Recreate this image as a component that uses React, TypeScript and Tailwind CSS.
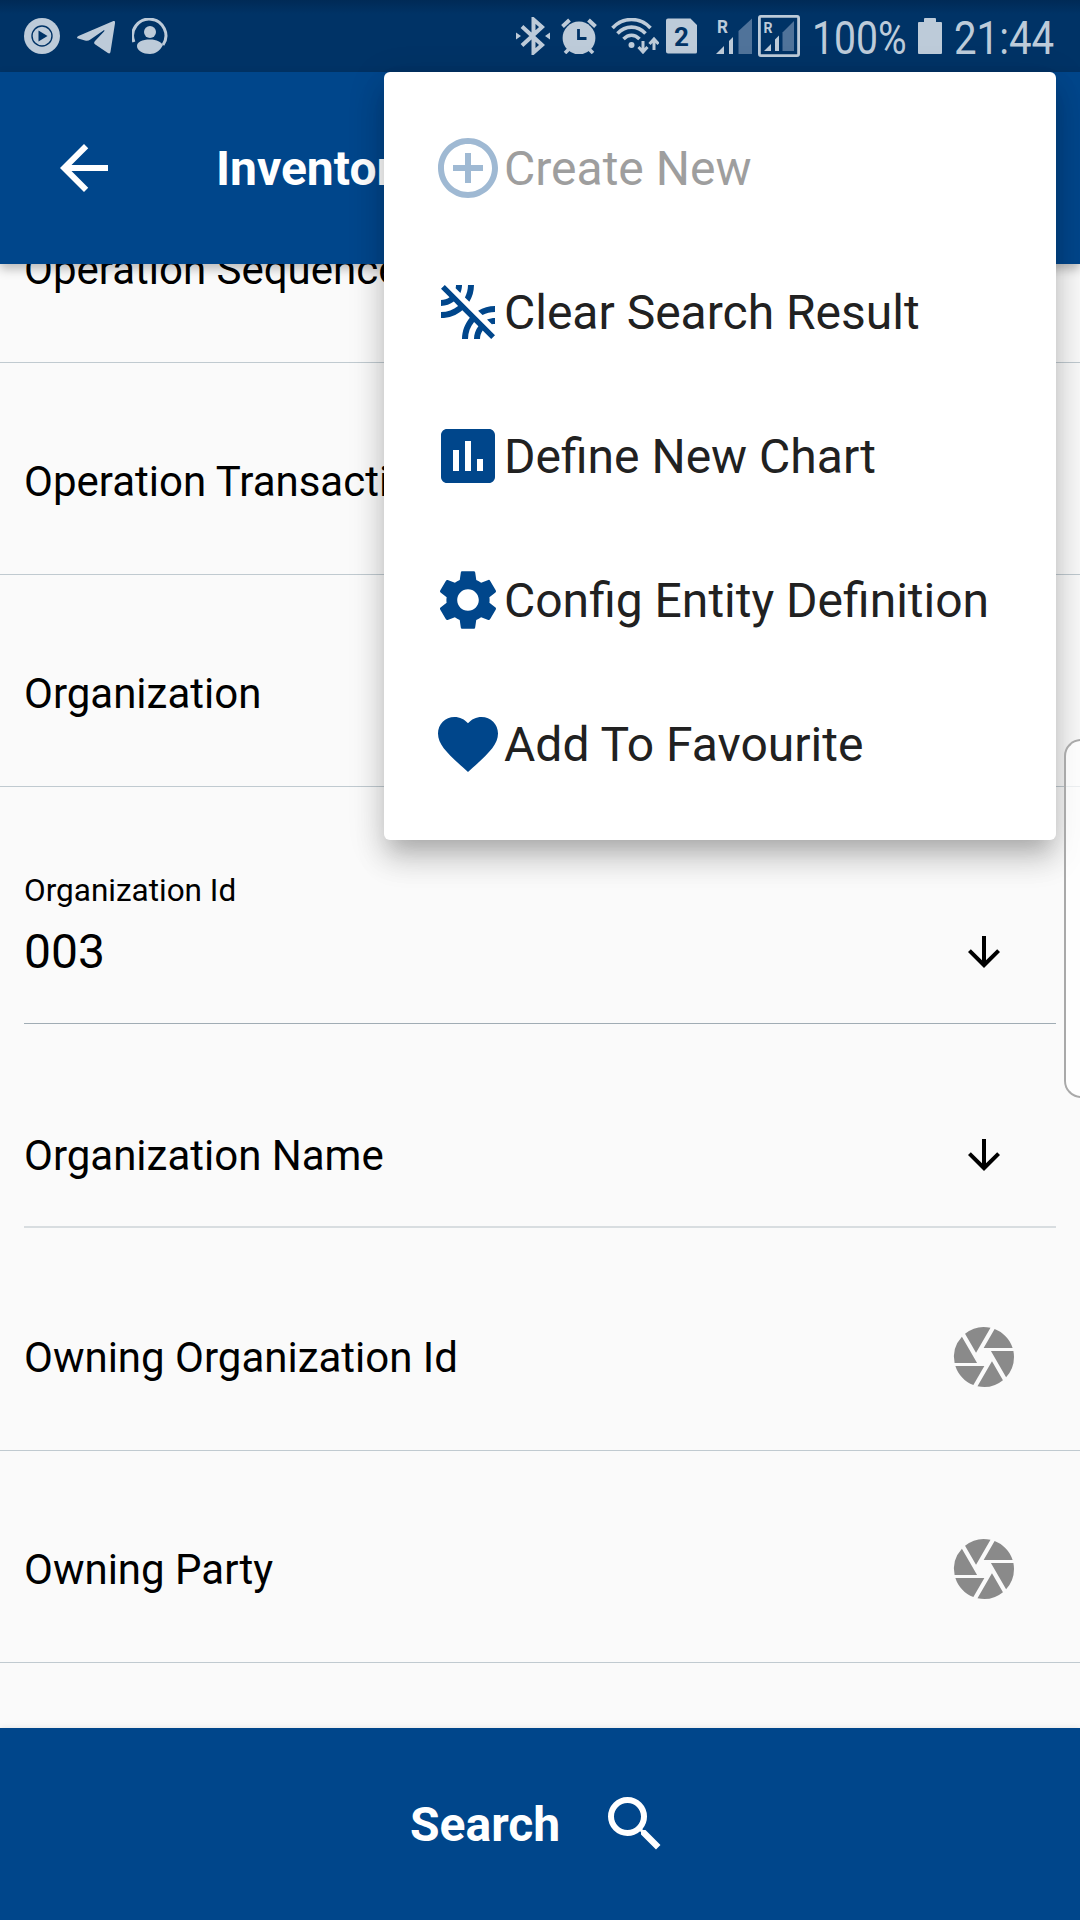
import type { ReactNode } from 'react';
import {
  MdArrowBack,
  MdArrowDownward,
  MdAssessment,
  MdCamera,
  MdControlPoint,
  MdFavorite,
  MdSearch,
  MdSettings,
} from 'react-icons/md';

function PlayBadge() {
  return (
    <svg className="h-9 w-9" viewBox="0 0 36 36" fill="none">
      <circle cx="18" cy="18" r="18" fill="#bdcbd9" />
      <circle cx="18" cy="18" r="10" stroke="#003366" strokeWidth="1.4" />
      <path d="M14.5 12.5v11l9-5.5z" fill="#003366" />
    </svg>
  );
}

function Telegram() {
  return (
    <svg className="ml-[17px] h-9 w-[38px]" viewBox="0 0 38 36" fill="#bdcbd9">
      <path d="M36.4 3.1c1.2-.4 1.8.2 1.7 1.4l-4.6 29.3c-.3 1.7-1.3 2-2.6 1.1L18.3 26.5c-1.5-1.2-1.5-2.2-.3-3.5l9-9.5c1-1.1.2-1.5-.9-.8L13.4 21.6c-1.8 1.2-3.5 1.5-5.4.9L1.2 20.6c-1.6-.5-1.5-1.8.2-2.7z" />
    </svg>
  );
}

function Person() {
  return (
    <svg className="ml-[17px] h-9 w-9" viewBox="0 0 36 36" fill="none">
      <path d="M1.9 24A16.6 16.6 0 1 1 31 27" stroke="#bdcbd9" strokeWidth="3" />
      <circle cx="18" cy="14" r="6" fill="#bdcbd9" />
      <path d="M5 28C5 24 10 21.5 18 21.5C25 21.5 29 24 31 27C28 33 23 36 18 36C11 36 5 32.500 5 28z" fill="#bdcbd9" />
    </svg>
  );
}

function Bluetooth() {
  return (
    <svg className="h-[38px] w-[34px]" viewBox="0 0 34 38" fill="none">
      <path d="M6 9.500l20 18.500-8.500 7.500v-33l8.500 7.500L6 28.500" stroke="#bdcbd9" strokeWidth="4" />
      <path d="M0 15.500v7l5-3.500zM34 15.500v7l-5-3.500z" fill="#bdcbd9" />
    </svg>
  );
}

function Alarm() {
  return (
    <svg className="ml-[11px] h-9 w-9" viewBox="0 0 36 36" fill="none">
      <circle cx="18" cy="20" r="16.4" fill="#bdcbd9" />
      <path d="M1.5 8.500L8.500 2M34.500 8.500L27.500 2" stroke="#bdcbd9" strokeWidth="4" />
      <path d="M8 31l-4 4M28 31l4 4" stroke="#bdcbd9" strokeWidth="3.600" />
      <path d="M17.500 11v9.500h8" stroke="#003366" strokeWidth="2.800" />
    </svg>
  );
}

function Wifi() {
  return (
    <svg className="ml-[14px] h-9 w-12" viewBox="0 0 48 36" fill="none" stroke="#bdcbd9">
      <path d="M1.5 10C12-1.300 29-1.300 39.500 10" strokeWidth="3.600" />
      <path d="M6.500 15.500c8-8.500 20-8.500 28 0" strokeWidth="3.600" />
      <path d="M12.500 21c5-5 11-5 16 0" strokeWidth="3.600" />
      <circle cx="20.500" cy="27" r="3" fill="#bdcbd9" stroke="none" />
      <path d="M32 23v10M27.500 29l4.500 5 4.500-5M43 32V22M38.500 26l4.500-5 4.500 5" strokeWidth="3" />
    </svg>
  );
}

function Sim() {
  return (
    <svg className="ml-[7px] h-9 w-[31px]" viewBox="0 0 31 36">
      <path d="M2 .5h22.500L31 7v27a1.500 1.500 0 0 1-1.500 1.500H2A2 2 0 0 1 0 33.500v-31a2 2 0 0 1 2-2z" fill="#bdcbd9" />
      <text x="15.500" y="28" textAnchor="middle" fontFamily="Roboto" fontSize="26" fontWeight="700" fill="#003366">2</text>
    </svg>
  );
}

function Signal() {
  return (
    <svg className="ml-[19px] h-9 w-9" viewBox="0 0 36 36" fill="#bdcbd9">
      <text x="1" y="15" fontFamily="Roboto" fontSize="17.500" fontWeight="700" textLength="11" lengthAdjust="spacingAndGlyphs">R</text>
      <path d="M0 36l8-8v8zM13 36V23l4-4v17z" />
      <path d="M22.500 36V13L36 .5V36z" fill="#50739a" />
    </svg>
  );
}

function BoxedSignal() {
  return (
    <svg className="ml-[6px] h-[42px] w-[42px]" viewBox="0 0 42 42" fill="#bdcbd9">
      <rect x="1.400" y="1.400" width="39.200" height="39.200" rx="1.500" fill="none" stroke="#bdcbd9" strokeWidth="2.800" />
      <text x="5.500" y="18" fontFamily="Roboto" fontSize="15" fontWeight="700" textLength="9" lengthAdjust="spacingAndGlyphs">R</text>
      <path d="M6 36l7-7v7zM17 36V24.500l4-4V36z" />
      <path d="M24.500 36V17.500L36 6v30z" fill="#50739a" />
    </svg>
  );
}

function LeakRemove() {
  return (
    <svg className="size-[72px]" viewBox="0 0 24 24" fill="currentColor">
      <path d="M10 3H8c0 .37-.04.72-.12 1.060l1.590 1.590C9.810 4.840 10 3.940 10 3zM3 4.270l2.840 2.840C5.030 7.670 4.060 8 3 8v2c1.610 0 3.090-.55 4.270-1.460L8.700 9.970C7.140 11.240 5.160 12 3 12v2c2.710 0 5.190-.99 7.110-2.620l2.500 2.500C10.990 15.810 10 18.290 10 21h2c0-2.160.76-4.140 2.030-5.690l1.430 1.430C14.550 17.910 14 19.390 14 21h2c0-1.060.33-2.030.89-2.840L19.730 21 21 19.730 4.270 3 3 4.270zM14 3h-2c0 1.500-.37 2.910-1.020 4.160l1.460 1.460C13.420 6.980 14 5.060 14 3zm5.940 13.120c.34-.08.69-.12 1.060-.12v-2c-.94 0-1.840.19-2.660.52l1.600 1.600zm-4.560-4.560l1.460 1.460C18.090 12.370 19.500 12 21 12v-2c-2.060 0-3.980.58-5.620 1.560z" />
    </svg>
  );
}

function StatusBar() {
  return (
    <header className="flex h-[72px] shrink-0 items-center bg-[linear-gradient(#002a56,#003366_14px)] pl-6 text-[46px] leading-[72px] text-[#bdcbd9]">
      <PlayBadge />
      <Telegram />
      <Person />
      <div className="ml-[348px] flex items-center">
        <Bluetooth />
        <Alarm />
        <Wifi />
        <Sim />
        <Signal />
        <BoxedSignal />
      </div>
      <span className="ml-[12px] mt-[3px] w-[94px] shrink-0">
        <span className="inline-block origin-left scale-x-[0.85]">100%</span>
      </span>
      <svg className="ml-[12px] h-9 w-6 shrink-0" viewBox="0 0 24 36" fill="#bdcbd9">
        <path d="M7 0h10q1 0 1 1v3h5q1 0 1 1v30q0 1-1 1H1q-1 0-1-1V5q0-1 1-1h5V1q0-1 1-1z" />
      </svg>
      <span className="ml-[12px] mt-[3px] w-[100px] shrink-0">
        <span className="inline-block origin-left scale-x-[0.875]">21:44</span>
      </span>
    </header>
  );
}

function FieldRow({ label, scan = false }: { label: string; scan?: boolean }) {
  return (
    <div className="flex h-[212px] shrink-0 items-center justify-between border-b border-[#c0cad0] pl-6 pr-[60px] pt-6">
      <span className="whitespace-nowrap pt-[2px]">{label}</span>
      {scan && <MdCamera className="size-[72px] text-[#8a8a8a]" />}
    </div>
  );
}

function MenuItem({ icon, children, disabled = false }: { icon: ReactNode; children: string; disabled?: boolean }) {
  return (
    <li className={disabled ? 'flex h-36 items-center text-[#9e9e9e]' : 'flex h-36 items-center text-[#212121]'}>
      <span className={disabled ? 'text-[72px] text-[#9fb9d3]' : 'text-[72px] text-[#00468b]'}>{icon}</span>
      <span className="whitespace-nowrap pt-[2px]">{children}</span>
    </li>
  );
}

export default function App() {
  return (
    <div className="relative flex h-[1920px] w-[1080px] flex-col overflow-hidden bg-[#fafafa] font-[Roboto,sans-serif] text-[42px] leading-[50px] text-black">
      <StatusBar />
      <div className="z-10 flex h-48 shrink-0 items-center bg-[#00468b] pl-12 text-white shadow-[0_5px_10px_rgba(0,0,0,0.26)]">
        <MdArrowBack className="size-[72px]" />
        <h1 className="ml-24 pt-[2px] text-[48px] font-bold">Inventory</h1>
      </div>

      <main className="flex min-h-0 flex-1 flex-col overflow-hidden">
        <div className="-mt-[113px] flex flex-col">
          <FieldRow label="Operation Sequence" />
          <FieldRow label="Operation Transaction" />
          <FieldRow label="Organization" />
          <div className="mx-6 flex h-[237px] shrink-0 flex-col border-b border-[#a0acb4] pt-[85px]">
            <span className="text-[31.5px] leading-[38px]">Organization Id</span>
            <div className="mt-[12px] flex items-center justify-between pr-12 text-[48px] leading-[60px]">
              <span>003</span>
              <MdArrowDownward className="size-12" />
            </div>
          </div>
          <div className="mx-6 mb-[11px] flex h-[204px] shrink-0 items-center justify-between border-b-2 border-[#d8dde0] pr-12 pt-[60px]">
            <span className="pt-[2px]">Organization Name</span>
            <MdArrowDownward className="size-12" />
          </div>
          <FieldRow label="Owning Organization Id" scan />
          <FieldRow label="Owning Party" scan />
        </div>
      </main>

      <footer className="z-10 flex h-48 shrink-0 items-center bg-[#00468b] pl-[410px] text-[48px] font-bold text-white shadow-[0_0_6px_rgba(0,0,0,0.1)]">
        <span className="pt-[2px]">Search</span>
        <MdSearch className="ml-[39px] size-[72px]" />
      </footer>

      <ul className="absolute left-96 top-[72px] z-20 h-[768px] w-[672px] rounded-[6px] bg-white py-6 pl-12 text-[48px] leading-[56px] shadow-[0_15px_18px_-9px_rgba(0,0,0,0.12),0_21px_30px_0px_rgba(0,0,0,0.14),0_9px_36px_3px_rgba(0,0,0,0.12)]">
        <MenuItem icon={<MdControlPoint />} disabled>Create New</MenuItem>
        <MenuItem icon={<LeakRemove />}>Clear Search Result</MenuItem>
        <MenuItem icon={<MdAssessment />}>Define New Chart</MenuItem>
        <MenuItem icon={<MdSettings />}>Config Entity Definition</MenuItem>
        <MenuItem icon={<MdFavorite />}>Add To Favourite</MenuItem>
      </ul>
      <div className="absolute -right-[1px] top-[739px] z-30 h-[359px] w-[17px] rounded-l-[18px] border-2 border-r-0 border-[#a9a9a9] bg-white/70" />
    </div>
  );
}
